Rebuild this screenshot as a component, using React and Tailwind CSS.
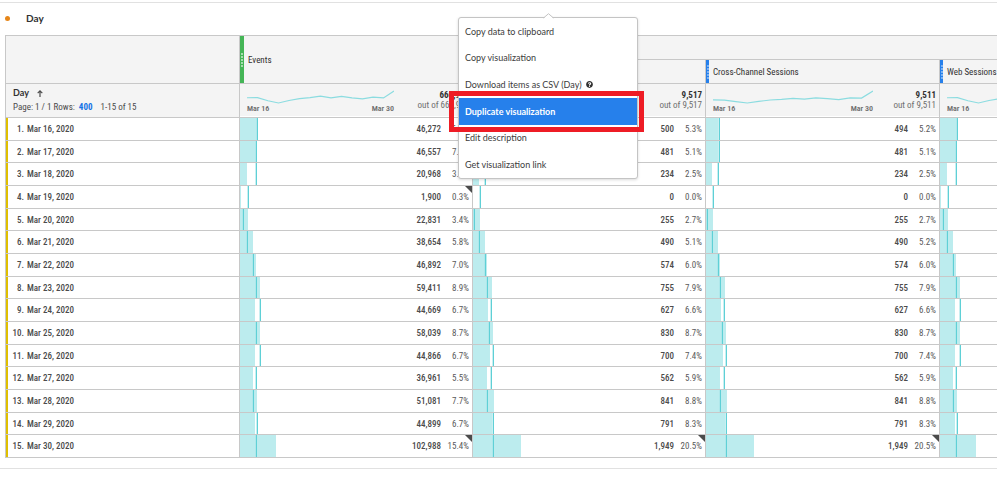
import { FaQuestionCircle } from "react-icons/fa";
import { clsx } from "clsx";

const dates = Array.from({ length: 15 }, (_, i) => `Mar ${16 + i}, 2020`);

const eventCounts = [46272, 46557, 20968, 1900, 22831, 38654, 46892, 59411, 44669, 58039, 44866, 36961, 51081, 44899, 102988];
const eventBars = [17, 17, 7, 1, 8, 13, 16, 20, 15, 20, 15, 13, 17, 15, 36];
const eventMarks = [17, 16, 16, 8, 3, 7, 13, 16, 20, 16, 20, 16, 13, 17, 16];

const sessionCounts = [500, 481, 234, 0, 255, 490, 574, 755, 627, 830, 700, 562, 841, 791, 1949];
const sessionBars = [12, 12, 6, 0, 7, 12, 14, 19, 15, 20, 17, 14, 21, 19, 48];
const sessionMarks = [13, 13, 12, 7, 1, 6, 12, 14, 18, 16, 20, 18, 14, 20, 20];

const columns = [
  {
    total: "666,988",
    trend: eventCounts,
    trendWidth: 147,
    counts: eventCounts,
    percents: ["6.9%", "7.0%", "3.1%", "0.3%", "3.4%", "5.8%", "7.0%", "8.9%", "6.7%", "8.7%", "6.7%", "5.5%", "7.7%", "6.7%", "15.4%"],
    bars: eventBars,
    marks: eventMarks,
    anomalies: [3, 14],
  },
  {
    total: "9,517",
    trend: null,
    counts: sessionCounts,
    percents: ["5.3%", "5.1%", "2.5%", "0.0%", "2.7%", "5.1%", "6.0%", "7.9%", "6.6%", "8.7%", "7.4%", "5.9%", "8.8%", "8.3%", "20.5%"],
    bars: sessionBars,
    marks: sessionMarks,
    anomalies: [14],
  },
  {
    total: "9,511",
    trend: sessionCounts,
    trendWidth: 160,
    counts: [494, ...sessionCounts.slice(1)],
    percents: ["5.2%", "5.1%", "2.5%", "0.0%", "2.7%", "5.2%", "6.0%", "7.9%", "6.6%", "8.7%", "7.4%", "5.9%", "8.8%", "8.3%", "20.5%"],
    bars: sessionBars,
    marks: sessionMarks,
    anomalies: [14],
  },
  {
    total: null,
    trend: eventCounts,
    trendWidth: 147,
    openEnded: true,
    counts: null,
    bars: eventBars,
    marks: eventMarks,
    anomalies: [],
  },
];

const menuItems = [
  { label: "Copy data to clipboard" },
  { label: "Copy visualization" },
  { label: "Download items as CSV (Day)", help: true },
  { label: "Duplicate visualization", active: true },
  { label: "Edit description" },
  { label: "Get visualization link" },
];

const cell = "p-0 border-r border-b border-[#c8c8c8]";
const headCell = "p-0 border-r border-b border-[#c8c8c8] bg-[#f4f4f4] text-left font-normal";
const rowHeight = (row) => (row % 3 === 1 ? "h-[22px]" : "h-[23px]");

function Grip({ green }) {
  return (
    <span
      className={clsx(
        "flex flex-col items-center justify-center gap-px self-stretch",
        green ? "w-1 bg-[#44b556]" : "w-[3px] bg-[#2680eb]"
      )}
    >
      {[0, 1, 2, 3, 4].map((n) => (
        <span key={n} className={clsx("h-[2px] w-[2px]", green ? "bg-[#a5dcae]" : "bg-[#7db3f3]")} />
      ))}
    </span>
  );
}

function MetricHeader({ label, green }) {
  return (
    <div className={clsx("flex items-center", green ? "h-[47px]" : "h-[23px]")}>
      <Grip green={green} />
      <span className="ml-1 text-[9px] whitespace-nowrap text-[#323232]">{label}</span>
    </div>
  );
}

function Trend({ values, width }) {
  const top = Math.max(...values);
  const low = Math.min(...values);
  const points = values.map((v, i) => `${(i * width) / 14},${13 - ((v - low) / (top - low)) * 12}`).join(" ");
  return (
    <svg width={width} height="14" viewBox={`0 0 ${width} 14`} aria-hidden="true">
      <polyline points={points} fill="none" stroke="#8bdce0" strokeWidth="1.2" />
    </svg>
  );
}

function Summary({ column }) {
  return (
    <div className="flex h-[33px] justify-between border-b border-white pr-[3px] pl-[7px]">
      <div className="pt-[6px]">
        {column.trend && (
          <>
            <Trend values={column.trend} width={column.trendWidth} />
            <div className="flex justify-between text-[8px] leading-[10px] font-semibold text-[#6e6e6e]">
              <span>Mar 16</span>
              {!column.openEnded && <span>Mar 30</span>}
            </div>
          </>
        )}
      </div>
      {column.total && (
        <div className="pt-[6px] text-right whitespace-nowrap">
          <div className="text-[9px] leading-[10px] font-bold text-[#323232]">{column.total}</div>
          <div className="text-[9px] leading-[10px] text-[#6e6e6e]">out of {column.total}</div>
        </div>
      )}
    </div>
  );
}

function DataCell({ column, row }) {
  return (
    <td className={clsx(cell, rowHeight(row))}>
      <div className="relative flex h-full items-center justify-end pr-[3px]">
        <span className="absolute inset-y-0 left-0 bg-[#bcecee]" style={{ width: column.bars[row] }} />
        <span
          className="absolute inset-y-0 w-[2px] border-r border-[#5fd0d6] bg-[#a5e5e8]/60"
          style={{ left: column.marks[row] - 1 }}
        />
        {column.counts && (
          <>
            <span className="font-medium text-[#4b4b4b]">{column.counts[row].toLocaleString("en-US")}</span>
            <span className="w-[28px] text-right text-[#5a5a5a]">{column.percents[row]}</span>
          </>
        )}
        {column.anomalies.includes(row) && (
          <svg className="absolute top-0 right-0" width="7" height="7" viewBox="0 0 7 7" aria-hidden="true">
            <path d="M0 0H7V7Z" fill="#4b4b4b" />
          </svg>
        )}
      </div>
    </td>
  );
}

function ContextMenu() {
  return (
    <div className="absolute top-[14px] left-[458px] w-[180px] rounded-[3px] border border-[#c4c4c4] bg-white shadow-[0_1px_3px_rgba(0,0,0,0.15)]">
      <svg className="absolute -top-[5px] left-[84px]" width="12" height="6" viewBox="0 0 12 6" aria-hidden="true">
        <path d="M0 6L5.5 0.7L11 6Z" fill="#fff" />
        <path d="M0.5 5L5.5 0.7L10.5 5" fill="none" stroke="#c4c4c4" />
      </svg>
      <ul>
        {menuItems.map((item, i) => (
          <li key={item.label}>
            <button
              type="button"
              className={clsx(
                "flex w-full items-center gap-1 pl-[6px] text-left font-[Lato,sans-serif] text-[9px] leading-3",
                i % 3 === 1 ? "h-[26px]" : "h-[27px]",
                item.active ? "bg-[#2680eb] font-bold text-white" : "text-[#3c3c3c]"
              )}
            >
              {item.label}
              {item.help && <FaQuestionCircle size={7} color="#323232" aria-hidden="true" />}
            </button>
          </li>
        ))}
      </ul>
      <span className="pointer-events-none absolute top-[73px] -right-[7px] -left-[10px] h-[41px] border-[5px] border-[#ee1c25]" />
    </div>
  );
}

export default function App() {
  return (
    <main className="overflow-hidden bg-white pt-[2px] font-['Roboto_Condensed',Roboto,sans-serif] text-[9px] leading-3 text-[#4b4b4b]">
      <section className="relative border-y border-[#e1e1e1] pb-[10px]">
        <header className="flex h-8 items-center pb-[2px] pl-[5px]">
          <span className="h-[5px] w-[5px] rounded-full bg-[#e68619]" />
          <h2 className="ml-4 font-[Lato,sans-serif] text-[10px] font-bold text-[#323232]">Day</h2>
        </header>
        <table className="ml-[5px] w-[1168px] table-fixed border-separate border-spacing-0 border-t border-l border-[#c8c8c8]">
          <colgroup>
            <col className="w-[234px]" />
            <col className="w-[233px]" />
            <col className="w-[233px]" />
            <col className="w-[234px]" />
            <col className="w-[233px]" />
          </colgroup>
          <thead>
            <tr className="h-6">
              <th rowSpan={2} className={headCell} />
              <th rowSpan={2} className={headCell}>
                <MetricHeader label="Events" green />
              </th>
              <th colSpan={3} className={headCell} />
            </tr>
            <tr className="h-6">
              <th className={headCell} />
              <th className={headCell}>
                <MetricHeader label="Cross-Channel Sessions" />
              </th>
              <th className={headCell}>
                <MetricHeader label="Web Sessions" />
              </th>
            </tr>
            <tr className="h-[34px]">
              <th className={headCell}>
                <div className="flex h-[33px] flex-col gap-[2px] pt-[3px] pl-[7px]">
                  <div className="flex items-center gap-2">
                    <span className="font-[Lato,sans-serif] font-bold text-[#323232]">Day</span>
                    <svg width="6" height="7" viewBox="0 0 6 7" aria-hidden="true">
                      <path d="M3 7V1M0.7 3.2L3 0.9L5.3 3.2" fill="none" stroke="#4b4b4b" strokeWidth="1.2" />
                    </svg>
                  </div>
                  <div className="flex gap-1">
                    <span>
                      Page: 1 / 1 Rows:
                    </span>
                    <a href="#rows" className="font-bold text-[#1473e6]">400</a>
                    <span className="ml-1">1-15 of 15</span>
                  </div>
                </div>
              </th>
              {columns.map((column, i) => (
                <th key={i} className={headCell}>
                  <Summary column={column} />
                </th>
              ))}
            </tr>
          </thead>
          <tbody>
            {dates.map((date, row) => (
              <tr key={date}>
                <td className={clsx(cell, rowHeight(row))}>
                  <div className="flex h-full items-center border-l-2 border-[#dfbf00] font-medium">
                    <span className="w-4 text-right">{row + 1}.</span>
                    <span className="ml-[3px]">{date}</span>
                  </div>
                </td>
                {columns.map((column, i) => (
                  <DataCell key={i} column={column} row={row} />
                ))}
              </tr>
            ))}
          </tbody>
        </table>
        <ContextMenu />
      </section>
    </main>
  );
}
